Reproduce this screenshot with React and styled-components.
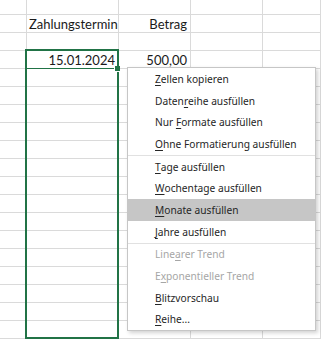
import styled, { createGlobalStyle } from "styled-components"

const GlobalStyle = createGlobalStyle`
  html, body {
    margin: 0;
    padding: 0;
    background: #fff;
    overflow: hidden;
  }
`

const ROWS = 19

const menuItems = [
  { pre: "", key: "Z", post: "ellen kopieren" },
  { pre: "Daten", key: "r", post: "eihe ausfüllen" },
  { pre: "Nur ", key: "F", post: "ormate ausfüllen" },
  { pre: "", key: "O", post: "hne Formatierung ausfüllen", sep: true },
  { pre: "", key: "T", post: "age ausfüllen" },
  { pre: "", key: "W", post: "ochentage ausfüllen" },
  { pre: "", key: "M", post: "onate ausfüllen", active: true },
  { pre: "", key: "J", post: "ahre ausfüllen", sep: true },
  { pre: "Line", key: "a", post: "rer Trend", disabled: true },
  { pre: "E", key: "x", post: "ponentieller Trend", disabled: true },
  { pre: "", key: "B", post: "litzvorschau" },
  { pre: "", key: "R", post: "eihe..." },
]

function cellText(row, col) {
  if (row === 1 && col === 1) return "Zahlungstermin"
  if (row === 1 && col === 2) return "Betrag"
  if (row === 3 && col === 1) return "15.01.2024"
  if (row === 3 && col === 2) return "500,00"
  return ""
}

export default function App() {
  const cells = []
  for (let r = 0; r < ROWS; r++) {
    for (let c = 0; c < 5; c++) {
      cells.push(
        <Cell key={`${r}-${c}`} $left={r === 1 && c === 1}>
          {cellText(r, c)}
        </Cell>
      )
    }
  }

  return (
    <Sheet>
      <GlobalStyle />
      <Grid>{cells}</Grid>

      <Selection>
        <ActiveCell />
        <FillHandle />
      </Selection>

      <Menu>
        {menuItems.map((item, i) => (
          <MenuGroup key={i} $sep={item.sep}>
            <MenuItem $active={item.active} $disabled={item.disabled}>
              {item.pre}
              <u>{item.key}</u>
              {item.post}
            </MenuItem>
          </MenuGroup>
        ))}
      </Menu>
    </Sheet>
  )
}

const Sheet = styled.div`
  position: relative;
  width: 321px;
  height: 343px;
  overflow: hidden;
  background: #fff;
`

const Grid = styled.div`
  display: grid;
  grid-template-columns: 27px 92px 72px 72px 1fr;
  grid-template-rows: 15px repeat(${ROWS - 1}, 18px);
`

const Cell = styled.div`
  box-sizing: border-box;
  border-right: 1px solid #dadada;
  border-bottom: 1px solid #dadada;
  padding: 0 3px 0 2px;
  display: flex;
  align-items: flex-end;
  justify-content: ${(p) => (p.$left ? "flex-start" : "flex-end")};
  font-family: "Lato", "Liberation Sans", sans-serif;
  font-size: 13px;
  line-height: 16px;
  color: #1a1a1a;
  white-space: nowrap;
  overflow: hidden;
`

const Selection = styled.div`
  position: absolute;
  left: 25px;
  top: 49px;
  width: 94px;
  height: 290px;
  box-sizing: border-box;
  border: 2px solid #217346;
`

const ActiveCell = styled.div`
  height: 17px;
  border-bottom: 1px solid #217346;
`

const FillHandle = styled.div`
  position: absolute;
  right: -3px;
  top: 15px;
  width: 5px;
  height: 5px;
  background: #217346;
  border-left: 1px solid #fff;
  border-bottom: 1px solid #fff;
`

const Menu = styled.div`
  position: absolute;
  left: 127px;
  top: 67px;
  width: 189px;
  box-sizing: border-box;
  background: #fff;
  border: 1px solid #c6c6c6;
  box-shadow: 2px 2px 4px rgba(0, 0, 0, 0.18);
`

const MenuGroup = styled.div`
  border-bottom: ${(p) => (p.$sep ? "1px solid #e1e1e1" : "none")};
`

const MenuItem = styled.div`
  height: 21.7px;
  display: flex;
  align-items: center;
  padding-left: 27px;
  font-family: "Noto Sans", "Open Sans", sans-serif;
  font-size: 10.2px;
  color: ${(p) => (p.$disabled ? "#a6a6a6" : "#262626")};
  background: ${(p) => (p.$active ? "#c6c6c6" : "transparent")};
  white-space: pre;
  u {
    text-underline-offset: 2px;
  }
`
